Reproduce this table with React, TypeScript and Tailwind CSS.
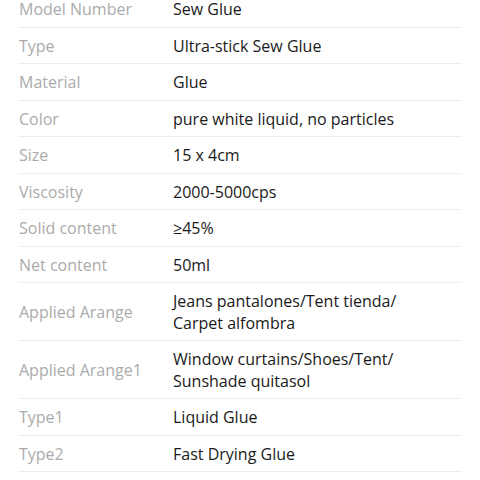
const specs: [string, string[]][] = [
  ["Model Number", ["Sew Glue"]],
  ["Type", ["Ultra-stick Sew Glue"]],
  ["Material", ["Glue"]],
  ["Color", ["pure white liquid, no particles"]],
  ["Size", ["15 x 4cm"]],
  ["Viscosity", ["2000-5000cps"]],
  ["Solid content", ["≥45%"]],
  ["Net content", ["50ml"]],
  ["Applied Arange", ["Jeans pantalones/Tent tienda/", "Carpet alfombra"]],
  ["Applied Arange1", ["Window curtains/Shoes/Tent/", "Sunshade quitasol"]],
  ["Type1", ["Liquid Glue"]],
  ["Type2", ["Fast Drying Glue"]],
];

export default function App() {
  return (
    <div className="h-[480px] w-[480px] overflow-hidden bg-white font-['Open_Sans',sans-serif]">
      <div className="mt-[-9px] px-[18px]">
        {specs.map(([label, value]) => (
          <div
            key={label}
            className="flex items-center border-b border-[#ededed] pt-[8px] pb-[6px] text-[16px] leading-[21.5px]"
          >
            <div className="w-[155px] shrink-0 pl-px text-[#ababab]">{label}</div>
            <div className="text-[#1a1a1a]">
              {value.map((line) => (
                <div key={line}>{line}</div>
              ))}
            </div>
          </div>
        ))}
      </div>
    </div>
  );
}
